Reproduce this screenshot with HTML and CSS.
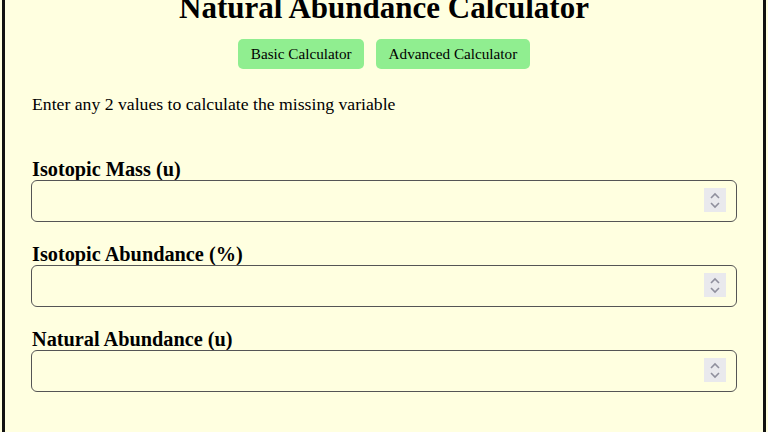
FILE: index.html
```html
<!DOCTYPE html>
<html>
<head>
<meta charset="utf-8">
<link rel="stylesheet" href="styles.css">
</head>
<body>
<div class="container">
  <h1 class="title">Natural Abundance Calculator</h1>
  <div class="tabs">
    <button class="tab">Basic Calculator</button>
    <button class="tab">Advanced Calculator</button>
  </div>
  <p class="hint">Enter any 2 values to calculate the missing variable</p>
  <div class="field">
    <label class="label">Isotopic Mass (u)</label>
    <div class="box">
      <input class="input" type="number">
      <span class="spin"><svg width="22" height="24" viewBox="0 0 22 24"><path d="M7 10 L11 6 L15 10 M7 15 L11 19 L15 15" fill="none" stroke="#8f8f9d" stroke-width="1.6"/></svg></span>
    </div>
  </div>
  <div class="field">
    <label class="label">Isotopic Abundance (%)</label>
    <div class="box">
      <input class="input" type="number">
      <span class="spin"><svg width="22" height="24" viewBox="0 0 22 24"><path d="M7 10 L11 6 L15 10 M7 15 L11 19 L15 15" fill="none" stroke="#8f8f9d" stroke-width="1.6"/></svg></span>
    </div>
  </div>
  <div class="field">
    <label class="label">Natural Abundance (u)</label>
    <div class="box">
      <input class="input" type="number">
      <span class="spin"><svg width="22" height="24" viewBox="0 0 22 24"><path d="M7 10 L11 6 L15 10 M7 15 L11 19 L15 15" fill="none" stroke="#8f8f9d" stroke-width="1.6"/></svg></span>
    </div>
  </div>
</div>
</body>
</html>
```
FILE: styles.css
```css
html, body {
  margin: 0;
  padding: 0;
  background: #ffffe0;
  font-family: "Liberation Serif", "Times New Roman", serif;
  color: #000;
  overflow: hidden;
}
.container {
  width: 764px;
  margin: -13px auto 0;
  border: 3px solid #111;
  padding: 0 26px 40px 26px;
  box-sizing: border-box;
}
.title {
  font-size: 31px;
  text-align: center;
  margin: 0 0 14px;
  line-height: 35px;
}
.tabs {
  display: flex;
  justify-content: center;
  gap: 12px;
}
.tab {
  background: #90ee90;
  border: none;
  border-radius: 5px;
  padding: 0 12.5px;
  height: 30px;
  font-family: "Liberation Serif", "Times New Roman", serif;
  font-size: 15.2px;
  color: #000;
}
.hint {
  font-size: 17.7px;
  margin: 25px 0 43px 1px;
}
.field {
  display: flex;
  flex-direction: column;
  margin-bottom: 21px;
}
.label {
  font-weight: bold;
  font-size: 20.3px;
  margin-left: 1px;
  line-height: 22px;
}
.box {
  position: relative;
  display: flex;
}
.input {
  flex: 1;
  height: 42px;
  box-sizing: border-box;
  border: 1px solid #555;
  border-radius: 6px;
  background: transparent;
  font-size: 16px;
  padding: 0 10px;
  margin: 0;
}
.input::-webkit-inner-spin-button,
.input::-webkit-outer-spin-button {
  -webkit-appearance: none;
  margin: 0;
}
.spin {
  position: absolute;
  right: 11px;
  top: 8px;
  width: 22px;
  height: 24px;
  background: #e9e9ed;
  display: block;
}
.spin svg {
  display: block;
}
```
